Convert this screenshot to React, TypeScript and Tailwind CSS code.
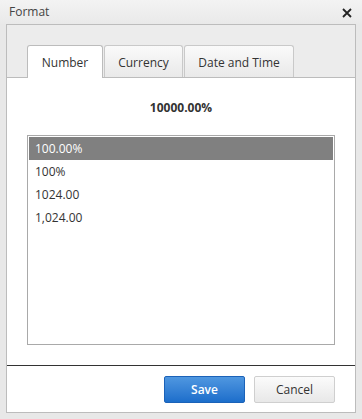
import React, { useState } from 'react';

const items = ['100.00%', '100%', '1024.00', '1,024.00'];
const tabs = [
  { label: 'Number', w: 'w-[76px]' },
  { label: 'Currency', w: 'w-[79px]' },
  { label: 'Date and Time', w: 'w-[110px]' },
];

const App = () => {
  const [tab, setTab] = useState(0);
  const [selected, setSelected] = useState(0);

  return (
    <div className="w-[362px] h-[419px] bg-[#e8e8e8] text-[#333] font-['Open_Sans',sans-serif] text-[12px] overflow-hidden">
      <div className="h-6 flex items-center justify-between pl-[9px] pr-[10px] bg-gradient-to-b from-[#f3f3f3] to-[#e9e9e9]">
        <span className="text-[12px] leading-none text-[#444]">Format</span>
        <svg width="10" height="10" viewBox="0 0 10 10" className="text-[#222] mt-[2px]">
          <path d="M1 1L9 9M9 1L1 9" stroke="currentColor" strokeWidth="1.8" />
        </svg>
      </div>

      <div className="mx-[6px] h-[389px] border border-[#bcbcbc] bg-white flex flex-col">
        <div className="h-[53px] bg-[#ececec] border-b border-[#bcbcbc] pl-[20px] pt-[20px] flex items-end">
          {tabs.map((t, i) => (
            <button
              key={t.label}
              onClick={() => setTab(i)}
              className={
                i === tab
                  ? `${t.w} h-[33px] -mb-px pt-[2px] bg-white border border-b-0 border-[#bcbcbc] rounded-t-[3px] text-[12px] text-[#333]`
                  : `${t.w} h-[32px] pt-[2px] ml-px bg-gradient-to-b from-[#fafafa] to-[#e9e9e9] border border-b-0 border-[#c9c9c9] rounded-t-[3px] text-[12px] text-[#333]`
              }
            >
              {t.label}
            </button>
          ))}
        </div>

        <div className="h-[57px] pt-[3px] flex items-center justify-center font-bold text-[12px] text-[#333]">10000.00%</div>

        <div className="mx-[20px] h-[210px] border border-[#a9a9a9] p-px">
          {items.map((it, i) => (
            <div
              key={it}
              onClick={() => setSelected(i)}
              className={
                i === selected
                  ? 'h-[23px] pt-px flex items-center pl-[6px] bg-[#808080] text-white'
                  : 'h-[23px] pt-px flex items-center pl-[6px] text-[#333]'
              }
            >
              {it}
            </div>
          ))}
        </div>

        <div className="mt-[20px] border-t border-[#333]" />

        <div className="flex justify-end gap-[9px] pt-[10px] pr-[20px]">
          <button className="w-[81px] h-[27px] rounded-[2px] border border-[#1b62b8] bg-gradient-to-b from-[#4f97e0] to-[#1c6ecb] text-white font-semibold text-[12px]">
            Save
          </button>
          <button className="w-[81px] h-[27px] rounded-[2px] border border-[#cfcfcf] bg-gradient-to-b from-[#fbfbfb] to-[#e8e8e8] text-[#333] text-[12px]">
            Cancel
          </button>
        </div>
      </div>
    </div>
  );
};

export default App;
